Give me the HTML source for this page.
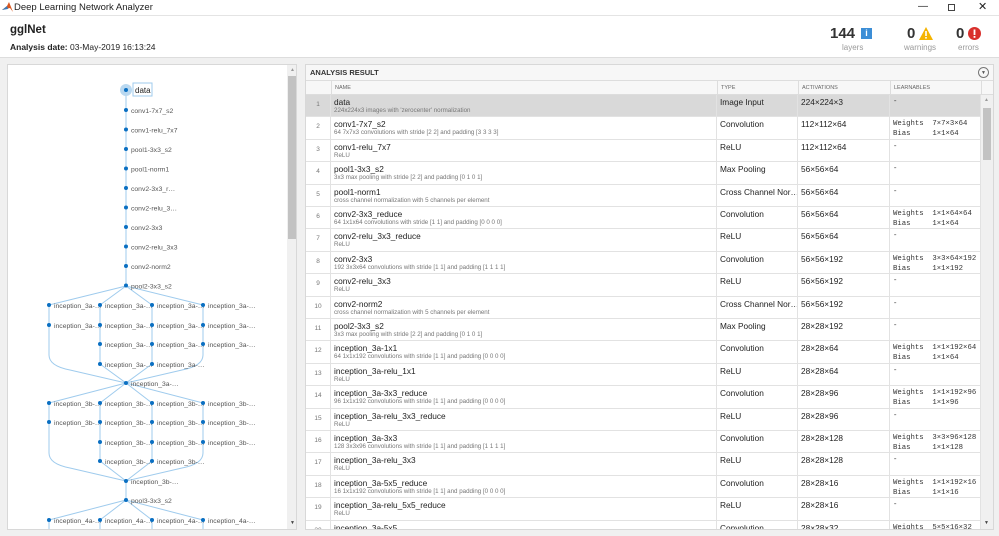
<!DOCTYPE html>
<html><head><meta charset="utf-8"><style>
*{margin:0;padding:0;box-sizing:border-box}
body{width:999px;height:536px;background:#f0f0f0;font-family:"Liberation Sans",sans-serif;position:relative;overflow:hidden;color:#222}
.tb{position:absolute;left:0;top:0;width:999px;height:15px;background:#fff;font-size:9.5px;line-height:15px}
.hdr{position:absolute;left:0;top:15px;width:999px;height:43px;background:#fff;border-top:1px solid #e4e4e4;border-bottom:1px solid #ddd}
.panel{position:absolute;background:#fff;border:1px solid #d8d8d8;overflow:hidden}
.row{position:absolute;left:0;width:675px;height:22.4px;border-bottom:1px solid #e2e2e2;font-size:8.3px}
.row div{position:absolute;top:0;height:22px;border-right:1px solid #e2e2e2;white-space:nowrap;overflow:hidden}
.c0{left:0;width:25px;text-align:center;color:#777;font-size:6.5px;padding-top:6px}
.c1{left:25px;width:386px;padding:2px 3px}
.c2{left:411px;width:81px;padding:2px 3px}
.c3{left:492px;width:92px;padding:2px 3px}
.row .c4{left:584px;width:91px;padding:2px 3px;font-family:"Liberation Mono",monospace;font-size:7.3px;color:#333;line-height:10px;white-space:pre}
.sub{font-size:6.2px;color:#777;display:block}
.nm{font-size:8.3px;color:#222}
</style></head><body>
<div class="tb"><svg style="position:absolute;left:2px;top:2px" width="11" height="10"><path d="M0 8 L5 4 L7 0 L11 10 L8 6 Z" fill="#d9561e"/><path d="M0 8 L5 4 L6 7Z" fill="#3a7ab8"/></svg><span style="position:absolute;left:14px">Deep Learning Network Analyzer</span>
<span style="position:absolute;left:918px;top:-1px;font-size:10px">—</span>
<span style="position:absolute;left:948px;top:4px;width:7px;height:7px;border:1px solid #444"></span>
<span style="position:absolute;left:978px;top:0;font-size:11px">✕</span></div>
<div class="hdr">
<div style="position:absolute;left:10px;top:8px;font-size:11.5px;font-weight:bold">gglNet</div>
<div style="position:absolute;left:10px;top:26px;font-size:8.5px"><b>Analysis date:</b> 03-May-2019 16:13:24</div>
<div style="position:absolute;left:830px;top:9px;font-size:15px;font-weight:bold;color:#333">144</div>
<div style="position:absolute;left:861px;top:12px;width:11px;height:11px;background:#3c8ed6;color:#fff;font-size:9px;font-weight:bold;text-align:center;line-height:11px">i</div>
<div style="position:absolute;left:842px;top:27px;font-size:8px;color:#999">layers</div>
<div style="position:absolute;left:907px;top:9px;font-size:15px;font-weight:bold;color:#333">0</div>
<svg style="position:absolute;left:919px;top:11px" width="14" height="13"><path d="M7 0 L14 13 L0 13Z" fill="#f5b400"/><rect x="6.2" y="4" width="1.6" height="5" fill="#fff"/><rect x="6.2" y="10" width="1.6" height="1.6" fill="#fff"/></svg>
<div style="position:absolute;left:904px;top:27px;font-size:8px;color:#999">warnings</div>
<div style="position:absolute;left:956px;top:9px;font-size:15px;font-weight:bold;color:#333">0</div>
<svg style="position:absolute;left:968px;top:11px" width="13" height="13"><circle cx="6.5" cy="6.5" r="6.5" fill="#d9302c"/><rect x="5.6" y="2.5" width="1.8" height="5.5" fill="#fff"/><rect x="5.6" y="9" width="1.8" height="1.8" fill="#fff"/></svg>
<div style="position:absolute;left:958px;top:27px;font-size:8px;color:#999">errors</div>
</div>

<div class="panel" style="left:7px;top:64px;width:290px;height:466px">
<svg width="300" height="540" style="position:absolute;left:-8px;top:-65px">
<g stroke="#9fcbed" stroke-width="1" fill="none">
<line x1="126" y1="90" x2="126" y2="286"/>
<path d="M126 286 L49 305 M126 286 L100 305 M126 286 L152 305 M126 286 L203 305"/>
<path d="M49 305 V355 Q49 366 70 370 L126 383 M100 305 V364 L126 383 M152 305 V364 L126 383 M203 305 V355 Q203 366 182 370 L126 383"/>
<path d="M126 383 L49 403 M126 383 L100 403 M126 383 L152 403 M126 383 L203 403"/>
<path d="M49 403 V453 Q49 464 70 468 L126 481 M100 403 V461 L126 481 M152 403 V461 L126 481 M203 403 V453 Q203 464 182 468 L126 481"/>
<line x1="126" y1="481" x2="126" y2="500"/>
<path d="M126 500 L49 520 M126 500 L100 520 M126 500 L152 520 M126 500 L203 520 M49 520 V540 M100 520 V540 M152 520 V540 M203 520 V540"/>
</g>
<circle cx="126" cy="90" r="6" fill="#b9d8f0"/>
<rect x="133" y="83" width="19" height="13" fill="#fff" stroke="#9fcbed"/>
<g fill="#0a6fc2">
<circle cx="126" cy="90" r="2"/><circle cx="126" cy="110" r="2"/><circle cx="126" cy="129.5" r="2"/><circle cx="126" cy="149" r="2"/><circle cx="126" cy="168.5" r="2"/><circle cx="126" cy="188" r="2"/><circle cx="126" cy="207.5" r="2"/><circle cx="126" cy="227" r="2"/><circle cx="126" cy="246.5" r="2"/><circle cx="126" cy="266" r="2"/><circle cx="126" cy="285.5" r="2"/>
<circle cx="49" cy="305" r="2"/><circle cx="100" cy="305" r="2"/><circle cx="152" cy="305" r="2"/><circle cx="203" cy="305" r="2"/>
<circle cx="49" cy="325" r="2"/><circle cx="100" cy="325" r="2"/><circle cx="152" cy="325" r="2"/><circle cx="203" cy="325" r="2"/>
<circle cx="100" cy="344" r="2"/><circle cx="152" cy="344" r="2"/><circle cx="203" cy="344" r="2"/>
<circle cx="100" cy="364" r="2"/><circle cx="152" cy="364" r="2"/>
<circle cx="126" cy="383" r="2"/>
<circle cx="49" cy="403" r="2"/><circle cx="100" cy="403" r="2"/><circle cx="152" cy="403" r="2"/><circle cx="203" cy="403" r="2"/>
<circle cx="49" cy="422" r="2"/><circle cx="100" cy="422" r="2"/><circle cx="152" cy="422" r="2"/><circle cx="203" cy="422" r="2"/>
<circle cx="100" cy="442" r="2"/><circle cx="152" cy="442" r="2"/><circle cx="203" cy="442" r="2"/>
<circle cx="100" cy="461" r="2"/><circle cx="152" cy="461" r="2"/>
<circle cx="126" cy="481" r="2"/><circle cx="126" cy="500" r="2"/>
<circle cx="49" cy="520" r="2"/><circle cx="100" cy="520" r="2"/><circle cx="152" cy="520" r="2"/><circle cx="203" cy="520" r="2"/>
</g>
<g font-family="Liberation Sans" font-size="6.8" fill="#555">
<text x="135" y="93" font-size="8" fill="#222">data</text>
<text x="131" y="113">conv1-7x7_s2</text><text x="131" y="132.5">conv1-relu_7x7</text><text x="131" y="152">pool1-3x3_s2</text><text x="131" y="171.5">pool1-norm1</text><text x="131" y="191">conv2-3x3_r…</text><text x="131" y="210.5">conv2-relu_3…</text><text x="131" y="230">conv2-3x3</text><text x="131" y="249.5">conv2-relu_3x3</text><text x="131" y="269">conv2-norm2</text><text x="131" y="288.5">pool2-3x3_s2</text>
<text x="54" y="308">inception_3a-…</text><text x="105" y="308">inception_3a-…</text><text x="157" y="308">inception_3a-…</text><text x="208" y="308">inception_3a-…</text>
<text x="54" y="328">inception_3a-…</text><text x="105" y="328">inception_3a-…</text><text x="157" y="328">inception_3a-…</text><text x="208" y="328">inception_3a-…</text>
<text x="105" y="347">inception_3a-…</text><text x="157" y="347">inception_3a-…</text><text x="208" y="347">inception_3a-…</text>
<text x="105" y="367">inception_3a-…</text><text x="157" y="367">inception_3a-…</text>
<text x="131" y="386">inception_3a-…</text>
<text x="54" y="406">inception_3b-…</text><text x="105" y="406">inception_3b-…</text><text x="157" y="406">inception_3b-…</text><text x="208" y="406">inception_3b-…</text>
<text x="54" y="425">inception_3b-…</text><text x="105" y="425">inception_3b-…</text><text x="157" y="425">inception_3b-…</text><text x="208" y="425">inception_3b-…</text>
<text x="105" y="445">inception_3b-…</text><text x="157" y="445">inception_3b-…</text><text x="208" y="445">inception_3b-…</text>
<text x="105" y="464">inception_3b-…</text><text x="157" y="464">inception_3b-…</text>
<text x="131" y="484">inception_3b-…</text><text x="131" y="503">pool3-3x3_s2</text>
<text x="54" y="523">inception_4a-…</text><text x="105" y="523">inception_4a-…</text><text x="157" y="523">inception_4a-…</text><text x="208" y="523">inception_4a-…</text>
</g></svg>
<div style="position:absolute;left:279px;top:0;width:10px;height:464px;background:#f0f0f0"></div>
<div style="position:absolute;left:280px;top:11px;width:8px;height:163px;background:#c2c2c2"></div>
<div style="position:absolute;left:282px;top:2px;font-size:5px;color:#999">▲</div>
<div style="position:absolute;left:282px;top:455px;font-size:5px;color:#444">▼</div>
</div>

<div class="panel" style="left:305px;top:64px;width:689px;height:466px">
<div style="position:absolute;left:0;top:0;width:687px;height:16px;background:#f7f7f7;border-bottom:1px solid #ddd;font-size:7.5px;font-weight:bold;line-height:15px;padding-left:4px;color:#333">ANALYSIS RESULT</div>
<div style="position:absolute;left:672px;top:2px;width:11px;height:11px;border:1px solid #777;border-radius:50%;font-size:5px;text-align:center;line-height:10px;color:#555">▼</div>
<div style="position:absolute;left:0;top:16px;width:687px;height:14px;background:#f7f7f7;border-bottom:1px solid #ddd;font-size:5.5px;color:#666;line-height:14px">
<span style="position:absolute;left:25px;height:14px;border-left:1px solid #ddd;padding-left:3px">NAME</span>
<span style="position:absolute;left:411px;height:14px;border-left:1px solid #ddd;padding-left:3px">TYPE</span>
<span style="position:absolute;left:492px;height:14px;border-left:1px solid #ddd;padding-left:3px">ACTIVATIONS</span>
<span style="position:absolute;left:584px;height:14px;border-left:1px solid #ddd;padding-left:3px">LEARNABLES</span>
<span style="position:absolute;left:675px;height:14px;border-left:1px solid #ddd"></span></div>
<div style="position:absolute;left:675px;top:30px;width:12px;height:436px;background:#f0f0f0"></div>
<div style="position:absolute;left:677px;top:43px;width:8px;height:52px;background:#c2c2c2"></div>
<div style="position:absolute;left:678px;top:32px;font-size:5px;color:#999">▲</div>
<div style="position:absolute;left:678px;top:455px;font-size:5px;color:#444">▼</div>
<div style="position:absolute;left:0;top:30px;width:675px;height:436px;overflow:hidden">
<div class="row" style="top:0;background:#d9d9d9"><div class="c0">1</div><div class="c1"><span class="nm">data</span><span class="sub">224x224x3 images with 'zerocenter' normalization</span></div><div class="c2">Image Input</div><div class="c3">224×224×3</div><div class="c4">-</div></div>
<div class="row" style="top:22.4px"><div class="c0">2</div><div class="c1"><span class="nm">conv1-7x7_s2</span><span class="sub">64 7x7x3 convolutions with stride [2 2] and padding [3 3 3 3]</span></div><div class="c2">Convolution</div><div class="c3">112×112×64</div><div class="c4">Weights  7×7×3×64
Bias     1×1×64</div></div>
<div class="row" style="top:44.8px"><div class="c0">3</div><div class="c1"><span class="nm">conv1-relu_7x7</span><span class="sub">ReLU</span></div><div class="c2">ReLU</div><div class="c3">112×112×64</div><div class="c4">-</div></div>
<div class="row" style="top:67.2px"><div class="c0">4</div><div class="c1"><span class="nm">pool1-3x3_s2</span><span class="sub">3x3 max pooling with stride [2 2] and padding [0 1 0 1]</span></div><div class="c2">Max Pooling</div><div class="c3">56×56×64</div><div class="c4">-</div></div>
<div class="row" style="top:89.6px"><div class="c0">5</div><div class="c1"><span class="nm">pool1-norm1</span><span class="sub">cross channel normalization with 5 channels per element</span></div><div class="c2">Cross Channel Nor…</div><div class="c3">56×56×64</div><div class="c4">-</div></div>
<div class="row" style="top:112px"><div class="c0">6</div><div class="c1"><span class="nm">conv2-3x3_reduce</span><span class="sub">64 1x1x64 convolutions with stride [1 1] and padding [0 0 0 0]</span></div><div class="c2">Convolution</div><div class="c3">56×56×64</div><div class="c4">Weights  1×1×64×64
Bias     1×1×64</div></div>
<div class="row" style="top:134.4px"><div class="c0">7</div><div class="c1"><span class="nm">conv2-relu_3x3_reduce</span><span class="sub">ReLU</span></div><div class="c2">ReLU</div><div class="c3">56×56×64</div><div class="c4">-</div></div>
<div class="row" style="top:156.8px"><div class="c0">8</div><div class="c1"><span class="nm">conv2-3x3</span><span class="sub">192 3x3x64 convolutions with stride [1 1] and padding [1 1 1 1]</span></div><div class="c2">Convolution</div><div class="c3">56×56×192</div><div class="c4">Weights  3×3×64×192
Bias     1×1×192</div></div>
<div class="row" style="top:179.2px"><div class="c0">9</div><div class="c1"><span class="nm">conv2-relu_3x3</span><span class="sub">ReLU</span></div><div class="c2">ReLU</div><div class="c3">56×56×192</div><div class="c4">-</div></div>
<div class="row" style="top:201.6px"><div class="c0">10</div><div class="c1"><span class="nm">conv2-norm2</span><span class="sub">cross channel normalization with 5 channels per element</span></div><div class="c2">Cross Channel Nor…</div><div class="c3">56×56×192</div><div class="c4">-</div></div>
<div class="row" style="top:224px"><div class="c0">11</div><div class="c1"><span class="nm">pool2-3x3_s2</span><span class="sub">3x3 max pooling with stride [2 2] and padding [0 1 0 1]</span></div><div class="c2">Max Pooling</div><div class="c3">28×28×192</div><div class="c4">-</div></div>
<div class="row" style="top:246.4px"><div class="c0">12</div><div class="c1"><span class="nm">inception_3a-1x1</span><span class="sub">64 1x1x192 convolutions with stride [1 1] and padding [0 0 0 0]</span></div><div class="c2">Convolution</div><div class="c3">28×28×64</div><div class="c4">Weights  1×1×192×64
Bias     1×1×64</div></div>
<div class="row" style="top:268.8px"><div class="c0">13</div><div class="c1"><span class="nm">inception_3a-relu_1x1</span><span class="sub">ReLU</span></div><div class="c2">ReLU</div><div class="c3">28×28×64</div><div class="c4">-</div></div>
<div class="row" style="top:291.2px"><div class="c0">14</div><div class="c1"><span class="nm">inception_3a-3x3_reduce</span><span class="sub">96 1x1x192 convolutions with stride [1 1] and padding [0 0 0 0]</span></div><div class="c2">Convolution</div><div class="c3">28×28×96</div><div class="c4">Weights  1×1×192×96
Bias     1×1×96</div></div>
<div class="row" style="top:313.6px"><div class="c0">15</div><div class="c1"><span class="nm">inception_3a-relu_3x3_reduce</span><span class="sub">ReLU</span></div><div class="c2">ReLU</div><div class="c3">28×28×96</div><div class="c4">-</div></div>
<div class="row" style="top:336px"><div class="c0">16</div><div class="c1"><span class="nm">inception_3a-3x3</span><span class="sub">128 3x3x96 convolutions with stride [1 1] and padding [1 1 1 1]</span></div><div class="c2">Convolution</div><div class="c3">28×28×128</div><div class="c4">Weights  3×3×96×128
Bias     1×1×128</div></div>
<div class="row" style="top:358.4px"><div class="c0">17</div><div class="c1"><span class="nm">inception_3a-relu_3x3</span><span class="sub">ReLU</span></div><div class="c2">ReLU</div><div class="c3">28×28×128</div><div class="c4">-</div></div>
<div class="row" style="top:380.8px"><div class="c0">18</div><div class="c1"><span class="nm">inception_3a-5x5_reduce</span><span class="sub">16 1x1x192 convolutions with stride [1 1] and padding [0 0 0 0]</span></div><div class="c2">Convolution</div><div class="c3">28×28×16</div><div class="c4">Weights  1×1×192×16
Bias     1×1×16</div></div>
<div class="row" style="top:403.2px"><div class="c0">19</div><div class="c1"><span class="nm">inception_3a-relu_5x5_reduce</span><span class="sub">ReLU</span></div><div class="c2">ReLU</div><div class="c3">28×28×16</div><div class="c4">-</div></div>
<div class="row" style="top:425.6px"><div class="c0">20</div><div class="c1"><span class="nm">inception_3a-5x5</span></div><div class="c2">Convolution</div><div class="c3">28×28×32</div><div class="c4">Weights  5×5×16×32</div></div>
</div></div>
</body></html>
